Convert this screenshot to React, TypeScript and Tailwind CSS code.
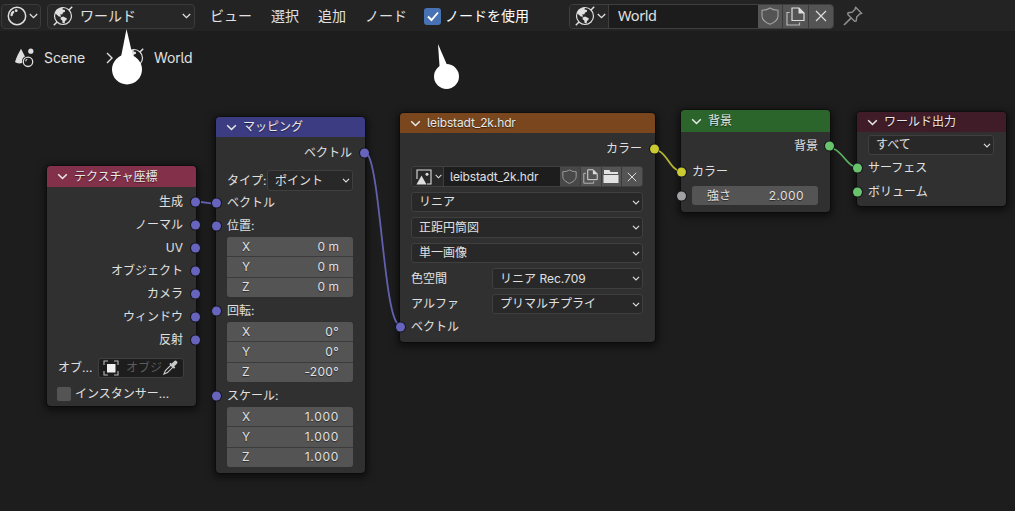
import type { ReactNode } from "react";

const Chevron = ({ className = "w-[9px] h-[6px]" }: { className?: string }) => (
  <svg viewBox="0 0 9 6" className={`shrink-0 ${className}`} fill="none" stroke="currentColor" strokeWidth="1.3">
    <path d="M0.8 1 L4.5 4.7 L8.2 1" />
  </svg>
);

const Shield = ({ className = "" }: { className?: string }) => (
  <svg viewBox="0 0 18 18" className={className} fill="none" stroke="#a3a3a3" strokeWidth="1.1">
    <path d="M9 1 C7 2.6 4 3.2 1 3.2 V9 C1 13 5 15.7 9 17.2 C13 15.7 17 13 17 9 V3.2 C14 3.2 11 2.6 9 1 Z" />
  </svg>
);

const Copy = ({ className = "" }: { className?: string }) => (
  <svg viewBox="0 0 19 19" className={className} fill="none" stroke="#dedede" strokeWidth="1.2">
    <path d="M6 1 H13 L18 6 V13.5 H6 Z" />
    <path d="M12.5 0.6 L18.5 6.5 H12.5 Z" fill="#dedede" stroke="none" />
    <path d="M3.8 5.5 H1 V18 H13.5 V15.6" stroke="#b9b9b9" />
  </svg>
);

const Cross = ({ className = "" }: { className?: string }) => (
  <svg viewBox="0 0 12 12" className={className} fill="none" stroke="#dedede" strokeWidth="1.2">
    <path d="M1 1 L11 11 M11 1 L1 11" />
  </svg>
);

const Globe = ({ className = "w-5 h-5" }: { className?: string }) => (
  <svg viewBox="0 0 20 20" className={`shrink-0 ${className}`} fill="none" stroke="#e0e0e0" strokeWidth="1.3">
    <circle cx="10" cy="10" r="8.5" strokeWidth="1.2" />
    <path d="M0.8 19.2 L4 16 M16 4 L19.2 0.8" strokeWidth="1.5" />
    <path
      d="M2 7.5 C3 4 6 1.5 9.8 1.5 L9.6 3.4 L12 4 L11.8 6 L10 6.6 L9.3 8.6 L7.2 8.3 L8.2 10.8 L5.8 10.4 L3.6 8.6 Z"
      fill="#e0e0e0"
      stroke="none"
    />
    <path d="M7.6 11.6 L10.2 10.4 L14 12.4 L13 14.4 L12 14.8 L11.6 17.6 L9.6 17 L9.3 14.6 L7.6 13.2 Z" fill="#e0e0e0" stroke="none" />
  </svg>
);

const Ball = () => (
  <svg viewBox="0 0 20 20" className="h-5 w-5 shrink-0" fill="none" stroke="#dedede">
    <circle cx="10" cy="10" r="8.7" strokeWidth="1.5" />
    <path d="M4.6 9.2 C4.6 7.8 5.2 6.8 6.2 6" strokeWidth="2.3" strokeLinecap="round" />
    <circle cx="9.2" cy="4.7" r="1.4" fill="#dedede" stroke="none" />
  </svg>
);

const SceneIcon = () => (
  <svg viewBox="0 0 20 20" className="h-5 w-5 shrink-0" fill="#dedede">
    <path d="M7 0.8 L11 8.5 C8.5 9.7 7.6 12 8.2 15 C5.5 15.8 2.5 15.3 1 14 C2.5 9 5 4.5 7 0.8 Z" />
    <circle cx="16.8" cy="3.2" r="2.6" />
    <circle cx="14" cy="13.8" r="4.7" fill="#1d1d1d" stroke="#dedede" strokeWidth="1.3" />
    <path d="M11.6 13.4 A2.6 2.6 0 0 1 13.3 11.3" fill="none" stroke="#dedede" strokeWidth="1.2" />
  </svg>
);

const Pin = () => (
  <svg viewBox="0 0 20 20" className="h-5 w-5" fill="none" stroke="#8f8f8f" strokeWidth="1.4" strokeLinejoin="round">
    <path d="M12.6 1.2 L18.8 7.4 L16.6 8 L13.7 11 L13.2 15 L11.6 15.2 L4.8 8.4 L5 6.8 L9 6.3 L12 3.4 Z" />
    <path d="M8.2 11.8 L1 19" strokeWidth="1.7" />
  </svg>
);

const Eyedropper = () => (
  <svg viewBox="0 0 16 16" className="h-[15px] w-[15px] shrink-0" fill="none" stroke="#c9c9c9">
    <path d="M9.2 4.6 L2.6 11.2 L1 15 L4.8 13.4 L11.4 6.8" strokeWidth="1.2" />
    <path d="M7.4 3.6 L12.4 8.6" strokeWidth="2" />
    <path d="M10.5 5.5 L13.3 2.7" strokeWidth="4" strokeLinecap="round" />
  </svg>
);

const ObjectIcon = () => (
  <svg viewBox="0 0 16 16" className="h-4 w-4 shrink-0" fill="none" stroke="#b9b9b9" strokeWidth="1.1">
    <rect x="4" y="4" width="8.5" height="8.5" fill="#f0f0f0" stroke="none" />
    <path d="M1 5 V1 H5 M11 1 H15 V5 M15 11 V15 H11 M5 15 H1 V11" />
  </svg>
);

const ImageIcon = () => (
  <svg viewBox="0 0 16 16" className="h-4 w-4 shrink-0" fill="none" stroke="#dedede" strokeWidth="1.1">
    <path d="M1 10 V1 H15 V15 H11" />
    <path d="M0.5 15.5 L5.5 6.5 L10.5 15.5 Z" fill="#dedede" stroke="none" />
    <circle cx="11" cy="5.2" r="1.5" fill="#dedede" stroke="none" />
  </svg>
);

const Folder = () => (
  <svg viewBox="0 0 16 15" className="h-[15px] w-4" fill="#e2e2e2">
    <path d="M1 1 H6.5 L7.5 3 H15 V5 H1 Z" />
    <path d="M0.5 6 H15.5 V14 H0.5 Z" />
  </svg>
);

type SocketTone = "vector" | "color" | "shader" | "value";
const tones: Record<SocketTone, string> = {
  vector: "bg-[#6764bd]",
  color: "bg-[#c9c932]",
  shader: "bg-[#68c46b]",
  value: "bg-[#a1a1a1]",
};

const Socket = ({ tone, side }: { tone: SocketTone; side: "in" | "out" }) => (
  <i
    className={`absolute top-1/2 h-[9px] w-[9px] -translate-y-1/2 rounded-full shadow-[0_0_0_1px_#15151f] ${tones[tone]} ${
      side === "in" ? "-left-[4.5px]" : "-right-[4px]"
    }`}
  />
);

const Row = ({
  children,
  tone,
  side = "in",
  className = "h-[23px]",
}: {
  children?: ReactNode;
  tone?: SocketTone;
  side?: "in" | "out";
  className?: string;
}) => (
  <div className={`relative flex items-center ${side === "out" ? "justify-end pr-[13px]" : "pl-[11px] pr-3"} ${className}`}>
    {tone && <Socket tone={tone} side={side} />}
    {children}
  </div>
);

const Node = ({
  title,
  place,
  header,
  children,
}: {
  title: string;
  place: string;
  header: string;
  children: ReactNode;
}) => (
  <section className={`absolute flex flex-col rounded-[4px] bg-[#303030] shadow-[0_2px_7px_3px_rgba(0,0,0,0.5),0_0_0_1px_#151515] ${place}`}>
    <header className={`flex shrink-0 items-center rounded-t-[4px] pl-[10px] text-[#e8e8e8] ${header}`}>
      <Chevron className="mr-[6px] h-[7px] w-[11px]" />
      <span className="[text-shadow:0_1px_1px_rgba(0,0,0,0.5)]">{title}</span>
    </header>
    {children}
  </section>
);

const Select = ({ children, className }: { children: ReactNode; className: string }) => (
  <div className={`flex items-center justify-between rounded-[3px] border border-[#3f3f3f] bg-[#282828] pl-[7px] pr-[2px] ${className}`}>
    <span>{children}</span>
    <Chevron className="h-[5px] w-[8px]" />
  </div>
);

const XYZ = ({ values, digits = "" }: { values: string[]; digits?: string }) => (
  <div className="ml-[11px] mr-3 flex h-[60px] flex-col gap-px overflow-hidden rounded-[3px] bg-[#3b3b3b]">
    {values.map((v, i) => (
      <div key={i} className="flex flex-1 items-center justify-between bg-[#545454] pl-[15px] pr-[14px] [text-shadow:0_1px_1px_rgba(0,0,0,0.5)]">
        <span>{"XYZ"[i]}</span>
        <span className={digits}>{v}</span>
      </div>
    ))}
  </div>
);

export default function App() {
  return (
    <div className="relative flex h-[511px] w-[1015px] flex-col overflow-hidden bg-[#1d1d1d] font-['Inter','Noto_Sans_CJK_JP',sans-serif] text-[12px] leading-none text-[#e0e0e0] [font-feature-settings:'cv05']">
      <div className="flex h-[31px] shrink-0 items-center bg-[#232323] pb-px pl-[1px] pt-[2px] text-[14px] whitespace-nowrap">
        <div className="flex h-[25px] w-10 items-center gap-[2px] rounded-[4px] border border-[#3b3b3b] bg-[#272727] pl-[5px]">
          <Ball />
          <Chevron />
        </div>
        <div className="ml-[6px] flex h-[25px] w-[148px] items-center rounded-[4px] border border-[#3b3b3b] bg-[#272727] pl-[5px] pr-[3px]">
          <Globe />
          <span className="ml-[7px] flex-1">ワールド</span>
          <Chevron />
        </div>
        <span className="ml-[15px] w-[61px]">ビュー</span>
        <span className="w-[47px]">選択</span>
        <span className="w-[47px]">追加</span>
        <span className="w-[59px]">ノード</span>
        <span className="flex h-[17px] w-[17px] items-center justify-center rounded-[3px] bg-[#4772b3]">
          <svg viewBox="0 0 12 11" className="h-[11px] w-3" fill="none" stroke="#fff" strokeWidth="1.9">
            <path d="M1 5.5 L4.5 9 L11 1.5" />
          </svg>
        </span>
        <span className="ml-[4px] w-[124px] text-white">ノードを使用</span>
        <div className="flex h-[25px] w-[265px] overflow-hidden rounded-[4px] border border-[#3f3f3f]">
          <div className="flex w-[39px] items-center gap-[2px] border-r border-[#3f3f3f] bg-[#272727] pl-[5px]">
            <Globe />
            <Chevron />
          </div>
          <div className="flex flex-1 items-center bg-[#1c1c1c] pb-px pl-[9px] font-['Noto_Sans',sans-serif] text-[14.5px] tracking-[-0.4px]">World</div>
          <div className="flex w-[75px] gap-px bg-[#3b3b3b]">
            <span className="flex flex-1 items-center justify-center bg-[#545454]"><Shield className="h-[18px] w-[18px]" /></span>
            <span className="flex flex-1 items-center justify-center bg-[#545454]"><Copy className="h-[19px] w-[19px]" /></span>
            <span className="flex flex-1 items-center justify-center bg-[#545454]"><Cross className="h-3 w-3" /></span>
          </div>
        </div>
        <span className="ml-[9px]"><Pin /></span>
      </div>

      <div className="flex h-[54px] items-center pl-[14px] text-[14px]">
        <SceneIcon />
        <span className="ml-[10px] w-[62px] tracking-[-0.1px]">Scene</span>
        <svg viewBox="0 0 7 12" className="mr-[11px] h-3 w-[7px]" fill="none" stroke="currentColor" strokeWidth="1.4">
          <path d="M1 1 L6 6 L1 11" />
        </svg>
        <Globe />
        <span className="ml-[10px] tracking-[-0.15px]">World</span>
      </div>

      <Node title="テクスチャ座標" place="left-[47px] top-[166px] h-[240px] w-[149px]" header="h-[21px] bg-[#83314a]">
        <div className="mt-[3.5px]">
          {["生成", "ノーマル", "UV", "オブジェクト", "カメラ", "ウィンドウ", "反射"].map((t) => (
            <Row key={t} tone="vector" side="out">{t}</Row>
          ))}
        </div>
        <Row className="mt-[6px] h-5">
          <span className="w-10">オブ...</span>
          <div className="flex h-5 w-[86px] items-center rounded-[3px] border border-[#3f3f3f] bg-[#1d1d1d] pl-1 pr-[2px]">
            <ObjectIcon />
            <span className="ml-[7px] w-[37px] shrink-0 text-[#5c5c5c]">オブジ</span>
            <Eyedropper />
          </div>
        </Row>
        <Row className="mt-[5px] h-[22px]">
          <span className="-ml-px mr-1 h-[14px] w-[14px] rounded-[2px] bg-[#545454]" />
          <span>インスタンサー...</span>
        </Row>
      </Node>

      <Node title="マッピング" place="left-[216px] top-[117px] h-[356px] w-[149px]" header="h-[20px] bg-[#3c3c83]">
        <Row tone="vector" side="out" className="mt-1 h-[23px]">ベクトル</Row>
        <Row className="mt-[6px] h-[21px]">
          <span className="w-[40px] whitespace-nowrap">タイプ:</span>
          <Select className="h-[21px] w-[86px]">ポイント</Select>
        </Row>
        <Row tone="vector" className="mt-[1px] h-[22px]">ベクトル</Row>
        <Row tone="vector">位置:</Row>
        <XYZ values={["0 m", "0 m", "0 m"]} />
        <Row tone="vector" className="mt-[2px] h-[23px]">回転:</Row>
        <XYZ values={["0°", "0°", "-200°"]} digits="tracking-[0.3px]" />
        <Row tone="vector" className="mt-[2px] h-[23px]">スケール:</Row>
        <XYZ values={["1.000", "1.000", "1.000"]} digits="tracking-[0.7px]" />
      </Node>

      <Node title="leibstadt_2k.hdr" place="left-[400px] top-[113px] h-[229px] w-[255px]" header="h-[20px] bg-[#79461d] tracking-[-0.12px]">
        <Row tone="color" side="out" className="mt-[4px] h-[23px]">カラー</Row>
        <Row className="mt-[6px] h-[21px]">
          <div className="flex h-[21px] w-full overflow-hidden rounded-[3px] border border-[#3f3f3f]">
            <div className="flex w-8 items-center gap-[3px] border-r border-[#3f3f3f] bg-[#282828] pl-1">
              <ImageIcon />
              <Chevron className="h-[5px] w-[7px]" />
            </div>
            <div className="flex flex-1 items-center bg-[#1d1d1d] pl-[6px] tracking-[-0.15px]">leibstadt_2k.hdr</div>
            <div className="flex w-[82px] gap-px bg-[#3b3b3b]">
              <span className="flex flex-1 items-center justify-center bg-[#484848]"><Shield className="h-[15px] w-[15px]" /></span>
              <span className="flex flex-1 items-center justify-center bg-[#545454]"><Copy className="h-[15px] w-[15px]" /></span>
              <span className="flex flex-1 items-center justify-center bg-[#545454]"><Folder /></span>
              <span className="flex flex-1 items-center justify-center bg-[#545454]"><Cross className="h-[10px] w-[10px]" /></span>
            </div>
          </div>
        </Row>
        <Row className="mt-[5px] h-5"><Select className="h-5 w-full">リニア</Select></Row>
        <Row className="mt-[5px] h-[21px]"><Select className="h-[21px] w-full">正距円筒図</Select></Row>
        <Row className="mt-[5px] h-5"><Select className="h-5 w-full">単一画像</Select></Row>
        <Row className="mt-[5px] h-[21px]">
          <span className="w-[81px]">色空間</span>
          <Select className="h-[21px] flex-1">リニア Rec.709</Select>
        </Row>
        <Row className="mt-[5px] h-5">
          <span className="w-[81px]">アルファ</span>
          <Select className="h-5 flex-1">プリマルチプライ</Select>
        </Row>
        <Row tone="vector" className="mt-px h-[23px]">ベクトル</Row>
      </Node>

      <Node title="背景" place="left-[681px] top-[110px] h-[102px] w-[149px]" header="h-[22px] bg-[#2b652b]">
        <Row tone="shader" side="out" className="mt-[2px] h-[24px] !pr-3">背景</Row>
        <Row tone="color" className="mt-[2px] h-[24px]">カラー</Row>
        <Row tone="value">
          <div className="flex h-[19px] w-full items-center justify-between rounded-[3px] bg-[#545454] pl-[15px] pr-[14px] [text-shadow:0_1px_1px_rgba(0,0,0,0.5)]">
            <span>強さ</span>
            <span className="tracking-[0.4px]">2.000</span>
          </div>
        </Row>
      </Node>

      <Node title="ワールド出力" place="left-[857px] top-[112px] h-[94px] w-[149px]" header="h-[20px] bg-[#3f1c27]">
        <Row className="mt-[3px] h-5"><Select className="h-5 w-full">すべて</Select></Row>
        <Row tone="shader" className="mt-[1px] h-[24px]">サーフェス</Row>
        <Row tone="shader">ボリューム</Row>
      </Node>

      <svg className="pointer-events-none absolute inset-0" width="1015" height="511" fill="none" strokeWidth="1.8">
        <path d="M201 202 L211 203.3" stroke="#6260ad" />
        <path d="M368 155 C380 174 384 307 397 323" stroke="#6260ad" />
        <path d="M659 151 C667 155 670 167 677 170" stroke="#b5b534" />
        <path d="M834 149 C842 152 846 163 853 166" stroke="#5daf60" />
        <g fill="#fff">
          <path d="M126.5 29 L133 57 H121 Z" />
          <circle cx="127" cy="69.5" r="15" />
          <path d="M438 44 L447.5 66 H439.5 Z" />
          <circle cx="446.5" cy="76.5" r="12.5" />
        </g>
      </svg>
    </div>
  );
}
